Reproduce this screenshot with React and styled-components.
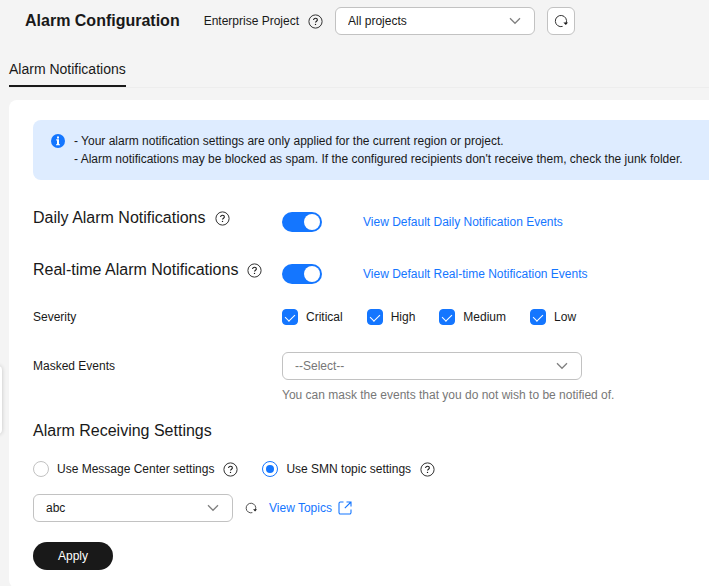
import React, { useId, useState } from "react";
import styled, { createGlobalStyle } from "styled-components";

const GlobalStyle = createGlobalStyle`
  * {
    box-sizing: border-box;
  }
  body {
    margin: 0;
    background: #f4f4f4;
    color: #191919;
    font-family: "Liberation Sans", Arial, sans-serif;
    font-size: 12px;
    line-height: 18px;
  }
  button,
  input,
  select {
    font: inherit;
    color: inherit;
    margin: 0;
  }
`;

const events = ["Critical", "High", "Medium", "Low"];

const HelpIcon = ({ label }) => (
  <IconButton type="button" aria-label={label}>
    <svg width="15" height="15" viewBox="0 0 15 15" fill="none">
      <circle cx="7.5" cy="7.5" r="6.6" stroke="#333" />
      <path
        d="M5.6 6.1C5.6 5 6.4 4.3 7.5 4.3s1.9.7 1.9 1.7c0 1.2-1.9 1.3-1.9 2.6"
        stroke="#191919"
        strokeWidth="1.1"
      />
      <circle cx="7.5" cy="10.4" r=".7" fill="#191919" />
    </svg>
  </IconButton>
);

const RefreshIcon = ({ size }) => (
  <svg width={size} height={size} viewBox="0 0 14 14" fill="none">
    <path d="M8.6 12.4A5.6 5.6 0 1 1 12.2 9" stroke="#333" />
    <path d="M9.4 8.4l2.4 2.6 2.2-2.6z" fill="#191919" />
  </svg>
);

const ExternalIcon = () => (
  <svg width="14" height="14" viewBox="0 0 14 14" fill="none">
    <path
      d="M5.5 1H2.4A1.4 1.4 0 0 0 1 2.4v9.2A1.4 1.4 0 0 0 2.4 13h9.2a1.4 1.4 0 0 0 1.4-1.4V8.5M8.5 1H13v4.5M13 1L6.8 7.2"
      stroke="#1476ff"
      strokeWidth="1.1"
    />
  </svg>
);

const InfoIcon = () => (
  <svg width="14" height="14" viewBox="0 0 14 14">
    <circle cx="7" cy="7" r="7" fill="#1476ff" />
    <path
      d="M6 2.6h2v1.8H6zM5.2 5.3H8v4.9h1v1.1H5v-1.1h1V6.4h-.8z"
      fill="#fff"
    />
  </svg>
);

const Dropdown = ({ label, options, muted, width, id }) => (
  <SelectBox $width={width}>
    <Select id={id} aria-label={label} $muted={muted}>
      {options.map((option) => (
        <option key={option}>{option}</option>
      ))}
    </Select>
    <svg width="12" height="8" viewBox="0 0 12 8" fill="none">
      <path d="M1 1.3l5 5 5-5" stroke="#808080" strokeWidth="1.3" />
    </svg>
  </SelectBox>
);

const NotificationRow = ({ title, link }) => {
  const [on, setOn] = useState(true);
  const id = useId();
  return (
    <ToggleRow>
      <Heading>
        <label htmlFor={id}>{title}</label>
        <HelpIcon label={`About ${title}`} />
      </Heading>
      <ToggleCell>
        <Toggle
          id={id}
          type="checkbox"
          role="switch"
          checked={on}
          onChange={() => setOn(!on)}
        />
        <Link href="#events">{link}</Link>
      </ToggleCell>
    </ToggleRow>
  );
};

const App = () => {
  const [receiver, setReceiver] = useState("smn");

  return (
    <Page>
      <GlobalStyle />
      <SideHandle type="button" aria-label="Open side menu" />
      <Header>
        <Title>Alarm Configuration</Title>
        <ProjectLabel>
          <label htmlFor="project">Enterprise Project</label>
          <HelpIcon label="About enterprise projects" />
        </ProjectLabel>
        <Dropdown id="project" options={["All projects"]} width="200px" />
        <RefreshButton type="button" aria-label="Refresh">
          <RefreshIcon size={14} />
        </RefreshButton>
      </Header>
      <Tabs>
        <Tab href="#alarm-notifications">Alarm Notifications</Tab>
      </Tabs>
      <Panel>
        <Notice>
          <InfoIcon />
          <div>
            <p>
              - Your alarm notification settings are only applied for the
              current region or project.
            </p>
            <p>
              - Alarm notifications may be blocked as spam. If the configured
              recipients don't receive them, check the junk folder.
            </p>
          </div>
        </Notice>
        <NotificationRow
          title="Daily Alarm Notifications"
          link="View Default Daily Notification Events"
        />
        <NotificationRow
          title="Real-time Alarm Notifications"
          link="View Default Real-time Notification Events"
        />
        <SeverityRow>
          <span>Severity</span>
          <Checks>
            {events.map((name) => (
              <Choice key={name}>
                <Checkbox type="checkbox" defaultChecked />
                {name}
              </Choice>
            ))}
          </Checks>
        </SeverityRow>
        <MaskedRow>
          <MaskedLabel htmlFor="masked">Masked Events</MaskedLabel>
          <div>
            <Dropdown
              id="masked"
              options={["--Select--"]}
              width="300px"
              muted
            />
            <Hint>
              You can mask the events that you do not wish to be notified of.
            </Hint>
          </div>
        </MaskedRow>
        <Heading>Alarm Receiving Settings</Heading>
        <Receivers>
          <ReceiverOption>
            <Choice>
              <Radio
                type="radio"
                name="receiver"
                checked={receiver === "center"}
                onChange={() => setReceiver("center")}
              />
              Use Message Center settings
            </Choice>
            <HelpIcon label="About Message Center settings" />
          </ReceiverOption>
          <ReceiverOption>
            <Choice>
              <Radio
                type="radio"
                name="receiver"
                checked={receiver === "smn"}
                onChange={() => setReceiver("smn")}
              />
              Use SMN topic settings
            </Choice>
            <HelpIcon label="About SMN topic settings" />
          </ReceiverOption>
        </Receivers>
        <TopicRow>
          <Dropdown label="SMN topic" options={["abc"]} width="200px" />
          <IconButton type="button" aria-label="Refresh topics">
            <RefreshIcon size={12} />
          </IconButton>
          <Link href="#topics">
            View Topics
            <ExternalIcon />
          </Link>
        </TopicRow>
        <ApplyButton type="button">Apply</ApplyButton>
      </Panel>
    </Page>
  );
};

export default App;

const Page = styled.main`
  position: relative;
  min-height: 100vh;
  padding-left: 9px;
`;

/* collapsed side menu, sits over the left edge */
const SideHandle = styled.button`
  position: absolute;
  left: -14px;
  top: 366px;
  width: 16px;
  height: 68px;
  padding: 0;
  border: none;
  border-radius: 4px;
  background: #fff;
  box-shadow: 0 0 4px rgba(0, 0, 0, 0.2);
`;

const Header = styled.header`
  display: flex;
  align-items: center;
  gap: 12px;
  padding: 7px 16px 0;
`;

const Title = styled.h1`
  margin: 0 12px 0 0;
  font-size: 16px;
  line-height: 24px;
  font-weight: 700;
`;

const ProjectLabel = styled.div`
  display: flex;
  align-items: center;
  gap: 9px;
`;

const IconButton = styled.button`
  display: flex;
  padding: 0;
  border: none;
  background: none;
  cursor: pointer;
`;

const RefreshButton = styled(IconButton)`
  width: 28px;
  height: 28px;
  align-items: center;
  justify-content: center;
  border: 1px solid #c2c2c2;
  border-radius: 6px;
  background: #fff;
`;

const SelectBox = styled.div`
  display: grid;
  align-items: center;
  width: ${(props) => props.$width};
  svg {
    grid-area: 1 / 1;
    justify-self: end;
    margin-right: 14px;
    pointer-events: none;
  }
`;

const Select = styled.select`
  grid-area: 1 / 1;
  appearance: none;
  width: 100%;
  height: 28px;
  padding: 0 32px 0 12px;
  border: 1px solid #c2c2c2;
  border-radius: 6px;
  background: #fff;
  color: ${(props) => (props.$muted ? "#777" : "#191919")};
`;

const Tabs = styled.nav`
  display: flex;
  margin-top: 24px;
  margin-bottom: 12px;
  border-bottom: 1px solid #ededed;
`;

const Tab = styled.a`
  padding-bottom: 6px;
  border-bottom: 2px solid #191919;
  color: #191919;
  font-size: 14px;
  line-height: 20px;
  text-decoration: none;
`;

const Panel = styled.section`
  padding: 20px 0 18px 24px;
  border-radius: 8px 0 0 8px;
  background: #fff;
`;

const Notice = styled.div`
  display: flex;
  gap: 9px;
  padding: 12px 18px;
  border-radius: 8px 0 0 8px;
  background: #deecff;
  svg {
    flex: none;
    margin-top: 2px;
  }
  p {
    margin: 0;
  }
`;

const Row = styled.div`
  display: grid;
  grid-template-columns: 249px 1fr;
`;

const ToggleRow = styled(Row)`
  margin-top: 25px;
`;

const Heading = styled.h2`
  display: flex;
  align-items: center;
  align-self: start;
  gap: 9px;
  margin: 0;
  font-size: 16px;
  line-height: 26px;
  font-weight: 400;
`;

const ToggleCell = styled.div`
  display: flex;
  align-items: center;
  gap: 41px;
  padding-top: 7px;
`;

const Toggle = styled.input`
  appearance: none;
  display: flex;
  width: 40px;
  height: 20px;
  padding: 2px;
  border-radius: 10px;
  background: #c2c2c2;
  cursor: pointer;
  &::before {
    content: "";
    width: 16px;
    height: 16px;
    border-radius: 50%;
    background: #fff;
  }
  &:checked {
    justify-content: flex-end;
    background: #1476ff;
  }
`;

const Link = styled.a`
  display: flex;
  align-items: center;
  gap: 6px;
  color: #1476ff;
  text-decoration: none;
`;

const SeverityRow = styled(Row)`
  margin: 24px 0 26px;
`;

const Checks = styled.div`
  display: flex;
  gap: 24px;
`;

const Choice = styled.label`
  display: flex;
  align-items: center;
  gap: 8px;
`;

const Checkbox = styled.input`
  appearance: none;
  width: 16px;
  height: 16px;
  display: flex;
  justify-content: center;
  border: 1px solid #c2c2c2;
  border-radius: 4px;
  background: #fff;
  &:checked {
    border-color: #1476ff;
    background: #1476ff;
  }
  &:checked::before {
    content: "";
    width: 5px;
    height: 8px;
    margin-top: 2px;
    border: solid #fff;
    border-width: 0 1px 1px 0;
    transform: rotate(45deg);
  }
`;

const Radio = styled.input`
  appearance: none;
  display: flex;
  align-items: center;
  justify-content: center;
  width: 16px;
  height: 16px;
  border: 1px solid #c2c2c2;
  border-radius: 50%;
  background: #fff;
  &:checked {
    border-color: #1476ff;
  }
  &:checked::before {
    content: "";
    width: 8px;
    height: 8px;
    border-radius: 50%;
    background: #1476ff;
  }
`;

const MaskedRow = styled(Row)`
  margin-bottom: 14px;
`;

const MaskedLabel = styled.label`
  padding-top: 5px;
`;

const Hint = styled.p`
  margin: 6px 0 0;
  color: #777;
`;

const Receivers = styled.div`
  display: flex;
  gap: 24px;
  margin: 16px 0;
`;

const ReceiverOption = styled.div`
  display: flex;
  align-items: center;
  gap: 9px;
`;

const TopicRow = styled.div`
  display: flex;
  align-items: center;
  gap: 12px;
`;

const ApplyButton = styled.button`
  min-width: 80px;
  height: 28px;
  margin-top: 20px;
  border: none;
  border-radius: 14px;
  background: #191919;
  color: #fff;
  cursor: pointer;
`;
